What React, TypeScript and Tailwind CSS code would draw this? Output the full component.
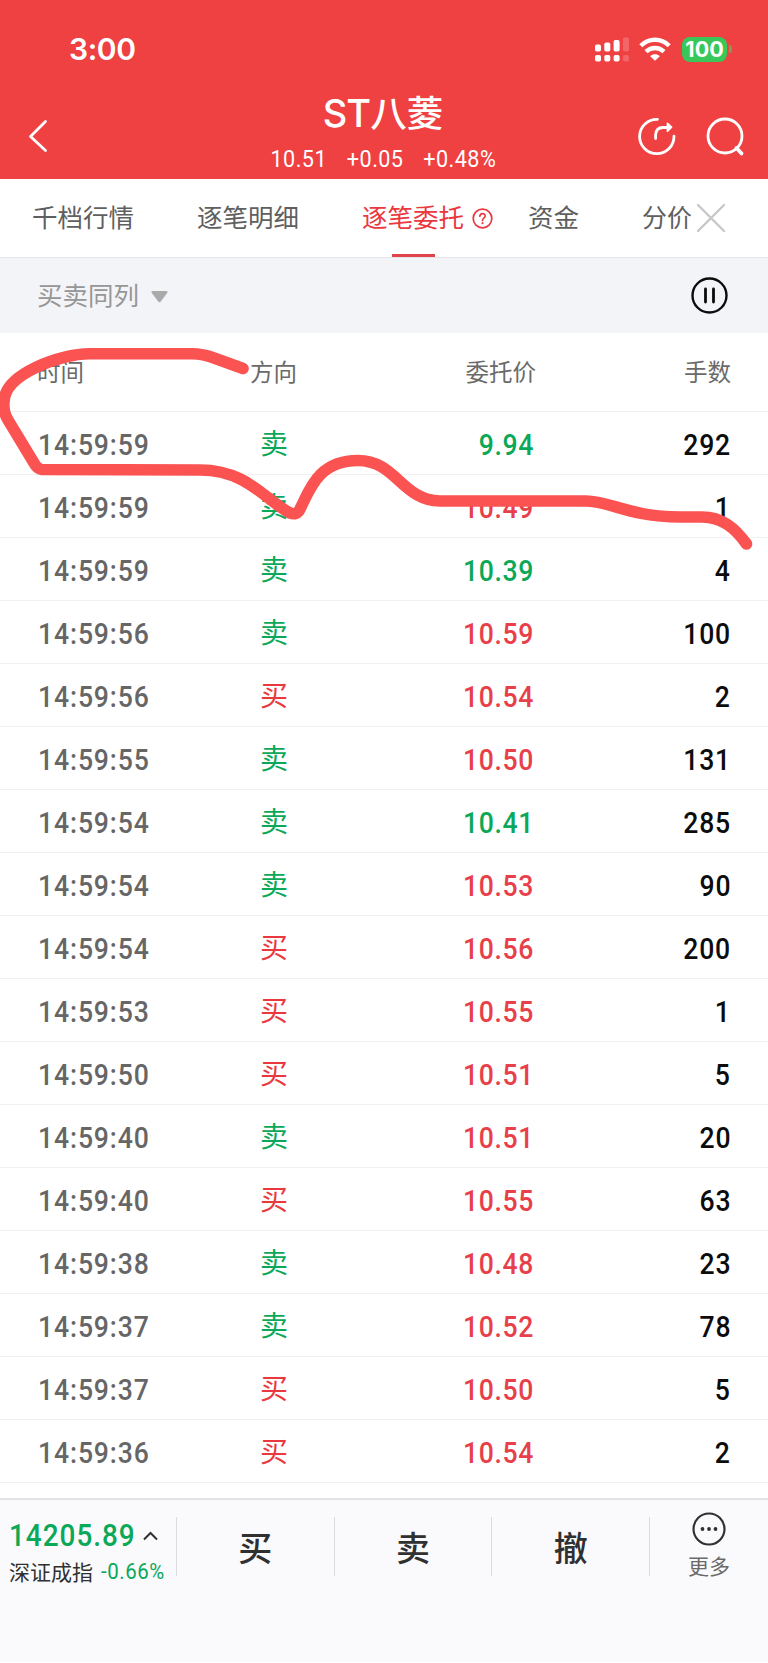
import clsx from "clsx";

type Order = {
  time: string;
  side: "买" | "卖";
  price: string;
  lots: number;
};

const PREV_CLOSE = 10.46;

const orders: Order[] = [
  { time: "14:59:59", side: "卖", price: "9.94", lots: 292 },
  { time: "14:59:59", side: "卖", price: "10.49", lots: 1 },
  { time: "14:59:59", side: "卖", price: "10.39", lots: 4 },
  { time: "14:59:56", side: "卖", price: "10.59", lots: 100 },
  { time: "14:59:56", side: "买", price: "10.54", lots: 2 },
  { time: "14:59:55", side: "卖", price: "10.50", lots: 131 },
  { time: "14:59:54", side: "卖", price: "10.41", lots: 285 },
  { time: "14:59:54", side: "卖", price: "10.53", lots: 90 },
  { time: "14:59:54", side: "买", price: "10.56", lots: 200 },
  { time: "14:59:53", side: "买", price: "10.55", lots: 1 },
  { time: "14:59:50", side: "买", price: "10.51", lots: 5 },
  { time: "14:59:40", side: "卖", price: "10.51", lots: 20 },
  { time: "14:59:40", side: "买", price: "10.55", lots: 63 },
  { time: "14:59:38", side: "卖", price: "10.48", lots: 23 },
  { time: "14:59:37", side: "卖", price: "10.52", lots: 78 },
  { time: "14:59:37", side: "买", price: "10.50", lots: 5 },
  { time: "14:59:36", side: "买", price: "10.54", lots: 2 },
];

const StatusBar = () => (
  <div className="flex h-[98px] items-center justify-between pl-[69px] pr-[36px]">
    <span className="font-['Inter'] text-[30px] font-semibold leading-none tracking-[-0.4px]">3:00</span>
    <div className="flex items-center">
      {/* Dual SIM signal */}
      <svg width="34" height="25" viewBox="0 0 34 25" fill="white">
        <rect x="0" y="7.5" width="6" height="7" rx="1.8" />
        <rect x="9.3" y="5.5" width="6" height="9" rx="1.8" />
        <rect x="18.6" y="3" width="6" height="11.5" rx="1.8" />
        <rect x="28" y="0.5" width="6" height="14" rx="1.8" opacity="0.2" />
        <rect x="0" y="18" width="6" height="6.5" rx="1.8" />
        <rect x="9.3" y="18" width="6" height="6.5" rx="1.8" />
        <rect x="18.6" y="18" width="6" height="6.5" rx="1.8" />
        <rect x="28" y="18" width="6" height="6.5" rx="1.8" opacity="0.2" />
      </svg>
      <svg className="ml-[10px]" width="32" height="24" viewBox="0 0 32 24" fill="none" stroke="white" strokeWidth="4.4">
        <path d="M1.8 8.7C9.8 0.7 22.2 0.7 30.2 8.7" />
        <path d="M7 14.6C12.3 9.7 19.7 9.7 25 14.6" />
        <path d="M11.2 19.2C14 16.6 18 16.6 20.8 19.2L16 23.8Z" fill="white" stroke="none" />
      </svg>
      <div className="ml-[11px] flex h-[25px] w-[45px] items-center justify-center rounded-[8px] bg-[#38c759] pt-[1px] font-['Inter'] text-[21.5px] font-bold leading-none">
        100
      </div>
      <div className="ml-[2px] h-[8px] w-[3px] rounded-r-full bg-[#7f9d50]" />
    </div>
  </div>
);

const Header = () => (
  <header className="h-[179px] bg-[#ef4042] text-white">
    <StatusBar />
    <div className="flex h-[81px] justify-between">
      <svg className="ml-[28px] mt-[21px]" width="20" height="34" viewBox="0 0 20 34" fill="none" stroke="white" strokeWidth="2.8" strokeLinecap="round" strokeLinejoin="round">
        <path d="M17.5 2.5L2.5 17.5L17.5 31.5" />
      </svg>
      <div className="ml-[81px] flex w-[300px] flex-col items-center">
        <h1 className="mt-[-6px] whitespace-nowrap text-[36.5px] font-medium leading-[40px]">
          <span className="font-['Inter'] text-[38px] font-medium tracking-[-1px]">ST</span>八菱
        </h1>
        <div className="mt-[14px] flex scale-x-[0.9] gap-[22px] whitespace-nowrap font-['Roboto'] text-[24px] leading-[24px] tracking-[0.5px]">
          <span>10.51</span>
          <span>+0.05</span>
          <span>+0.48%</span>
        </div>
      </div>
      <div className="mr-[22px] mt-[19px] flex gap-[29px]">
        <svg width="40" height="40" viewBox="0 0 40 40" fill="none" stroke="white" strokeWidth="2.8" strokeLinecap="round" strokeLinejoin="round">
          <path d="M20.5 2.3A17.2 17.2 0 1 0 37 19.2" />
          <path d="M18.6 21.5V18Q19 10.5 26 10.5H32" />
          <path d="M30.5 6.5L34.5 10.2L30.5 14.2Z" fill="white" strokeWidth="1.8" />
        </svg>
        <svg width="40" height="40" viewBox="0 0 40 40" fill="none" stroke="white" strokeWidth="2.8" strokeLinecap="round">
          <circle cx="19" cy="19" r="17" />
          <path d="M30.5 31L35.5 36.5" strokeWidth="3.8" />
        </svg>
      </div>
    </div>
  </header>
);

const Tabs = () => (
  <nav className="flex h-[79px] items-center border-b border-[#e3e5e8] bg-white text-[25.5px] leading-none text-[#5f5f5f]">
    <span className="mt-[-4px] ml-[32px] w-[165px]">千档行情</span>
    <span className="mt-[-4px] w-[165px]">逐笔明细</span>
    <span className="relative flex h-[78px] w-[166px] items-center pb-[4px] text-[#e9393f]">
      逐笔委托
      <svg className="ml-[8px] mt-[5px]" width="21" height="21" viewBox="0 0 21 21" fill="none" stroke="currentColor" strokeWidth="1.7" strokeLinecap="round">
        <circle cx="10.5" cy="10.5" r="9.3" />
        <path d="M7.9 8.2C8 4.7 13.1 4.8 13.1 8C13.1 10 10.5 10.1 10.5 12.3" />
        <path d="M10.5 15.1V15.3" strokeWidth="2" />
      </svg>
      <i className="absolute bottom-0 left-[30px] h-[3px] w-[43px] bg-[#e2434a]" />
    </span>
    <span className="mt-[-4px] w-[114px]">资金</span>
    <span className="mt-[-4px] w-[52px] whitespace-nowrap text-[25px]">分价</span>
    <svg className="ml-[2px]" width="30" height="30" viewBox="0 0 30 30" stroke="#c8c8c8" strokeWidth="2.4" strokeLinecap="round">
      <path d="M2 2L28 28M28 2L2 28" />
    </svg>
  </nav>
);

const FilterBar = () => (
  <div className="flex h-[75px] items-center bg-[#f3f4f8] pl-[37px] pr-[40px] text-[25.5px] leading-none text-[#969696]">
    <span className="mt-[-3px]">买卖同列</span>
    <svg className="ml-[12px] mt-[3px]" width="17" height="12" viewBox="0 0 17 12" fill="#aaaaaa">
      <path d="M1.5 0H15.5Q17.5 0.5 16 2.2L9.8 10.6Q8.5 12 7.2 10.6L1 2.2Q-0.5 0.5 1.5 0Z" />
    </svg>
    <svg className="ml-auto" width="37" height="37" viewBox="0 0 37 37" fill="none" stroke="#0c0c0c" strokeWidth="2.4" strokeLinecap="round">
      <circle cx="18.5" cy="18.5" r="17" />
      <path d="M14.5 12V25M22.5 12V25" strokeWidth="2.8" />
    </svg>
  </div>
);

const OrderTable = () => (
  <section className="h-[1165px] bg-white">
    <div className="flex h-[79px] items-center border-b border-[#f1f1f1] pr-[37px] text-[23.5px] leading-none text-[#6a6a6a]">
      <span className="w-[250px] pl-[37px]">时间</span>
      <span>方向</span>
      <span className="ml-auto mr-[148px]">委托价</span>
      <span>手数</span>
    </div>
    {orders.map((order, i) => (
      <div
        key={i}
        className="flex h-[63px] items-center border-b border-[#f1f1f1] pl-[38px] pr-[37px] pt-[6px] font-['Roboto'] text-[29.5px] font-medium leading-none"
      >
        <span className="w-[222px] origin-left scale-x-[0.9] tracking-[1px] text-[#666666]">{order.time}</span>
        <span
          className={clsx(
            "mt-[-8px] font-['Noto_Sans_CJK_SC'] text-[28px] font-normal",
            order.side === "买" ? "text-[#e9393f]" : "text-[#0aa858]"
          )}
        >
          {order.side}
        </span>
        <span
          className={clsx(
            "w-[246px] origin-right scale-x-[0.9] text-right tracking-[0.7px]",
            Number(order.price) > PREV_CLOSE ? "text-[#e8404a]" : "text-[#0aa858]"
          )}
        >
          {order.price}
        </span>
        <span className="ml-auto origin-right scale-x-[0.9] text-right tracking-[0.9px] text-[#0c0c0c]">{order.lots}</span>
      </div>
    ))}
  </section>
);

const BottomBar = () => (
  <footer className="flex h-[164px] border-t-2 border-[#e2e3e4] bg-[#fafafc] pt-[17px] text-[#303030]">
    <div className="h-[59px] w-[177px] whitespace-nowrap border-r border-[#dcdcde] pl-[9px]">
      <div className="flex items-center">
        <span className="w-[126px] origin-left scale-x-[0.9] font-['Roboto'] text-[31px] font-medium leading-[38px] tracking-[1.1px] text-[#0aa858]">14205.89</span>
        <svg className="ml-[8px]" width="15" height="10" viewBox="0 0 15 10" fill="none" stroke="#303030" strokeWidth="2">
          <path d="M1 8.5L7.5 2L14 8.5" />
        </svg>
      </div>
      <div className="mt-[-3px] flex items-center gap-[8px] leading-[34px]">
        <span className="text-[21px]">深证成指</span>
        <span className="origin-left scale-x-[0.95] pt-[3px] font-['Roboto'] text-[21.5px] tracking-[0.6px] text-[#0aa858]">-0.66%</span>
      </div>
    </div>
    {["买", "卖", "撤"].map((action) => (
      <div key={action} className="flex h-[59px] w-[157.7px] items-center justify-center border-r border-[#dcdcde] text-[34px] font-medium leading-none">
        {action}
      </div>
    ))}
    <div className="mt-[-5px] flex flex-1 flex-col items-center">
      <svg width="34" height="34" viewBox="0 0 34 34" fill="#303030">
        <circle cx="17" cy="17" r="15.5" fill="none" stroke="#303030" strokeWidth="2.2" />
        <circle cx="10.5" cy="17" r="1.9" />
        <circle cx="17" cy="17" r="1.9" />
        <circle cx="23.5" cy="17" r="1.9" />
      </svg>
      <span className="mt-[7px] text-[21px] leading-[24px] text-[#6a6a6a]">更多</span>
    </div>
  </footer>
);

// Hand drawn marker line over the first rows
const Marker = () => (
  <svg className="pointer-events-none absolute left-0 top-[340px]" width="768" height="220" viewBox="0 340 768 220" fill="none" stroke="#fb5252" strokeWidth="11.6" strokeLinecap="round" strokeLinejoin="round">
    <path d="M243 368.5L214 358Q203 353.8 192 353.8H90C60 353.8 4 374 4 402Q3 412 8 420L34 463Q37 469 42 469.5L200 470C247 470 265 500 290 513Q297 515.5 300 509C309 492 317 460.5 358 460.5C396 460.5 402 500.5 440 501H586C610 501 630 517 680 517H702C722 517 735 528 746.5 544" />
  </svg>
);

const App = () => {
  return (
    <div className="relative h-[1663px] w-[768px] overflow-hidden bg-white font-['Noto_Sans_CJK_SC',sans-serif]">
      <Header />
      <Tabs />
      <FilterBar />
      <OrderTable />
      <BottomBar />
      <Marker />
    </div>
  );
};

export default App;
